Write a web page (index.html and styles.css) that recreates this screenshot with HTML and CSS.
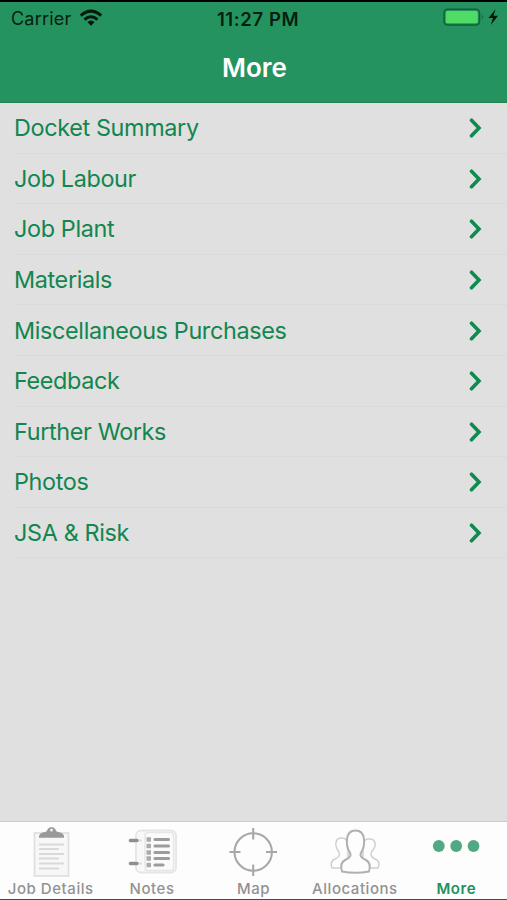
FILE: index.html
```html
<!DOCTYPE html>
<html lang="en">
<head>
<meta charset="utf-8">
<title>More</title>
<link rel="stylesheet" href="styles.css">
</head>
<body>
<div class="app">
  <header class="header">
    <div class="status">
      <div class="carrier"><span>Carrier</span>
        <svg class="wifi" width="24" height="18" viewBox="0 0 24 18"><g fill="none" stroke="#04190d" stroke-width="3"><path d="M1.800 6.600Q12 -2.400 22.200 6.600"/><path d="M5.500 10.600Q12 4.900 18.500 10.600"/></g><path d="M8.300 13.100Q12 10.100 15.700 13.100L12 16.800Z" fill="#04190d"/></svg>
      </div>
      <div class="time">11:27 PM</div>
      <svg class="battery" width="60" height="20" viewBox="0 0 60 20"><rect x="1" y="1.200" width="35.500" height="15.800" rx="3.500" fill="none" stroke="#15603a" stroke-width="1.500"/><rect x="2.800" y="3" width="32" height="12.300" rx="1.800" fill="#4fdc65"/><path d="M38.800 6.500Q41 9 38.800 11.700Z" fill="#15603a"/><path d="M52.500 1.300L45.500 10H50L47.800 17L55 7.700H50.500Z" fill="#03140a"/></svg>
    </div>
    <h1 class="title">More</h1>
  </header>
  <main class="list">
    <a class="row"><span>Docket Summary</span><svg class="chev" viewBox="0 0 14 22"><path d="M2.500 3.200L10 11L2.500 18.800"/></svg></a>
    <a class="row"><span>Job Labour</span><svg class="chev" viewBox="0 0 14 22"><path d="M2.500 3.200L10 11L2.500 18.800"/></svg></a>
    <a class="row"><span>Job Plant</span><svg class="chev" viewBox="0 0 14 22"><path d="M2.500 3.200L10 11L2.500 18.800"/></svg></a>
    <a class="row"><span>Materials</span><svg class="chev" viewBox="0 0 14 22"><path d="M2.500 3.200L10 11L2.500 18.800"/></svg></a>
    <a class="row"><span>Miscellaneous Purchases</span><svg class="chev" viewBox="0 0 14 22"><path d="M2.500 3.200L10 11L2.500 18.800"/></svg></a>
    <a class="row"><span>Feedback</span><svg class="chev" viewBox="0 0 14 22"><path d="M2.500 3.200L10 11L2.500 18.800"/></svg></a>
    <a class="row"><span>Further Works</span><svg class="chev" viewBox="0 0 14 22"><path d="M2.500 3.200L10 11L2.500 18.800"/></svg></a>
    <a class="row"><span>Photos</span><svg class="chev" viewBox="0 0 14 22"><path d="M2.500 3.200L10 11L2.500 18.800"/></svg></a>
    <a class="row"><span>JSA &amp; Risk</span><svg class="chev" viewBox="0 0 14 22"><path d="M2.500 3.200L10 11L2.500 18.800"/></svg></a>
  </main>
  <nav class="tabs">
    <a class="tab"><svg width="56" height="56" viewBox="0 0 56 56"><rect x="11.500" y="10" width="34" height="43" fill="#f7f7f7" stroke="#dedede" stroke-width="1.600"/><path d="M16 14.800V13Q17 9.500 22 9Q24 8.800 24.500 6.500Q25.500 4 28.500 4Q31.500 4 32.500 6.500Q33 8.800 35 9Q40 9.500 41 13V14.800Z" fill="#999"/><circle cx="28.500" cy="7" r="1.500" fill="#eee"/><path d="M16 21.500H41M16 26H36M16 31H41M16 35.500H36M16 40.500H41M16 45.500H36" stroke="#d9d9d9" stroke-width="2.200"/></svg><span>Job Details</span></a>
    <a class="tab"><svg width="56" height="56" viewBox="0 0 56 56"><rect x="12" y="7.500" width="40" height="42" rx="5" fill="#f8f8f8" stroke="#e5e5e5" stroke-width="1.800"/><rect x="21" y="9.500" width="28.500" height="38" rx="3" fill="#fbfbfb" stroke="#e6e6e6" stroke-width="1.400"/><path d="M6.500 17.500H13M6.500 40.500H13" stroke="#8f8f8f" stroke-width="3.600" stroke-linecap="round"/><path d="M15 17.500H18M15 40.500H18" stroke="#ddd" stroke-width="2"/><path d="M22.500 16.500H27M22.500 23H27M22.500 29.500H27M22.500 35.500H27M22.500 42H27" stroke="#ababab" stroke-width="4.400"/><path d="M31 16.500H44.500M31 23H44.500M31 29.500H44.500M31 35.500H44.500M31 42H39" stroke="#9c9c9c" stroke-width="3.200" stroke-linecap="round"/></svg><span>Notes</span></a>
    <a class="tab"><svg width="56" height="56" viewBox="0 0 56 56"><g fill="none" stroke="#a8a8a8" stroke-width="2.100"><circle cx="28.200" cy="29" r="18.700"/><path d="M28.200 5V16.500M28.200 41.500V53M4.500 29H15.500M41 29H52"/></g></svg><span>Map</span></a>
    <a class="tab"><svg width="56" height="56" viewBox="0 0 56 56"><g fill="#fdfdfd" stroke-linejoin="round"><path stroke="#cfcfcf" stroke-width="1.500" d="M20 45H5Q2.500 38 8 36Q14 33.500 12 29Q8 24 9 19Q10.500 14.500 15 15Q21 15 21 24V40ZM36 45H51Q54 38 48 36Q42.500 33.500 44.500 29Q49 24 48 20Q47 16 43 16Q36 15 36 24V40Z"/><path stroke="#b0b0b0" stroke-width="2" d="M15 48.500Q12.500 40 18 37Q23.500 34.500 23.500 32Q23.500 30 21.500 27Q19.500 23 20 16Q21 7.500 28.500 7.500Q36 7.500 37 16Q37.500 23 35.500 27Q33.500 30 33.500 32Q33.500 34.500 39 37Q44.500 40 42 48.500Q28.500 51 15 48.500Z"/></g></svg><span>Allocations</span></a>
    <a class="tab active"><svg width="56" height="56" viewBox="0 0 56 56"><g fill="#50a982"><circle cx="10.800" cy="23" r="5.900"/><circle cx="28.200" cy="23" r="5.900"/><circle cx="45.500" cy="23" r="5.900"/></g></svg><span>More</span></a>
  </nav>
</div>
</body>
</html>
```
FILE: styles.css
```css
* { box-sizing: border-box; }
body { margin: 0; font-family: Inter, "Liberation Sans", sans-serif; }
.app { width: 507px; height: 900px; display: flex; flex-direction: column; background: #e0e0e0; overflow: hidden; border-bottom: 1px solid #4b4b4b; }
.header { height: 103px; flex: none; background: #25935f; border-top: 2px solid #000; border-bottom: 1px solid #23824f; }
.status { display: grid; grid-template-columns: 1fr auto 1fr; align-items: center; height: 33px; padding: 0 4px 0 11px; color: #05200f; }
.carrier { display: flex; align-items: center; gap: 8px; font-size: 18px; letter-spacing: 0.200px; }
.carrier svg { margin-top: -2px; }
.time { font-size: 18.500px; font-weight: 600; margin-left: 2px; letter-spacing: 0.600px; }
.battery { justify-self: end; margin-top: -1px; }
.title { margin: 14px 0 0; padding-left: 2px; font-size: 26px; line-height: 38px; font-weight: 600; text-align: center; color: #fff; }
.list { flex: 1; }
.row { display: flex; align-items: center; justify-content: space-between; height: 50.600px; margin-left: 14px; padding-right: 24px; border-bottom: 1px solid #dadada; color: #13854f; font-size: 23.400px; letter-spacing: -0.360px; white-space: nowrap; }
.chev { width: 14px; height: 22px; margin-top: 1px; fill: none; stroke: #108a50; stroke-width: 3.600; stroke-linecap: round; stroke-linejoin: miter; }
.tabs { flex: none; height: 78px; display: grid; grid-template-columns: repeat(5, 1fr); background: #fdfdfd; border-top: 1px solid #cbcbcb; }
.tab { display: flex; flex-direction: column; align-items: center; color: #929292; font-size: 15px; font-weight: 500; letter-spacing: 0.550px; white-space: nowrap; }
.tab svg { margin-top: 1px; }
.tab span { line-height: 20px; }
.active { color: #21915c; font-weight: 600; }
```
